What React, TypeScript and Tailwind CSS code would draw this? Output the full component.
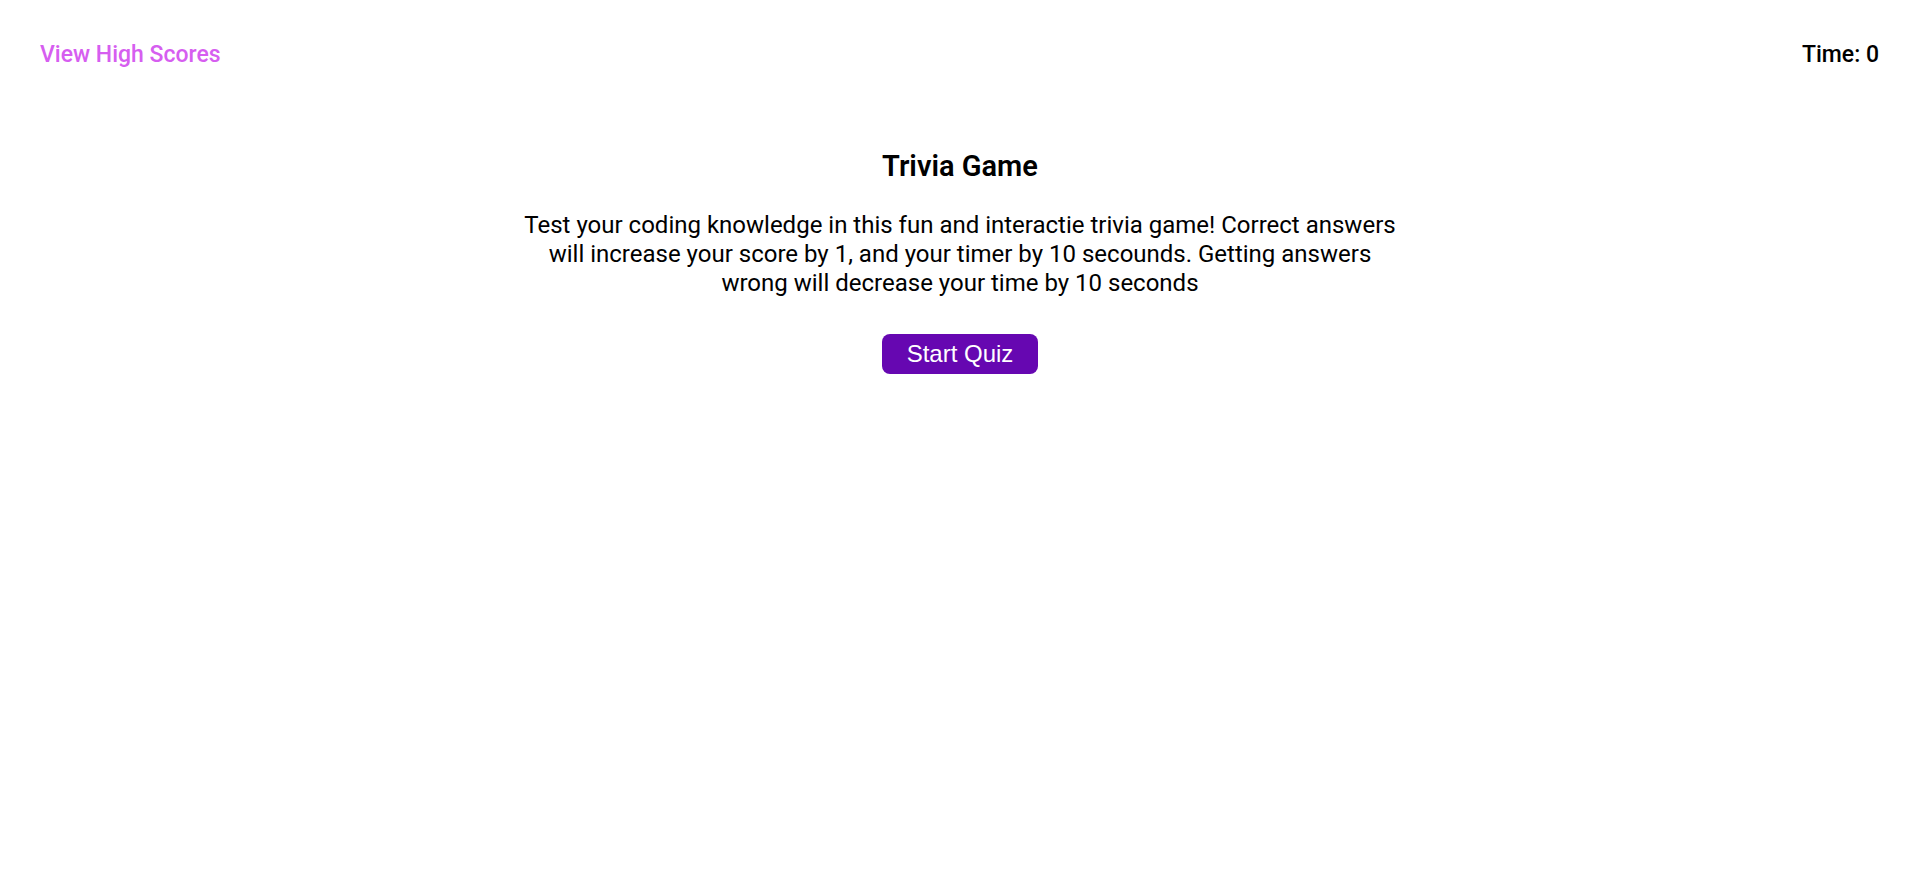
export default function App() {
  return (
    <div className="min-h-screen bg-white text-black font-['Roboto',sans-serif]">
      {/* Header */}
      <header className="flex items-start justify-between pl-10 pr-[33px] pt-[41px]">
        <a href="#" className="text-[23px] leading-[28px] font-medium text-[#d65ef0]">
          View High Scores
        </a>
        <div className="text-[23px] leading-[28px] font-medium">Time: 0</div>
      </header>

      {/* Intro */}
      <main className="flex flex-col items-center mt-[80px] pl-2">
        <h1 className="text-[29px] leading-[35px] font-semibold">Trivia Game</h1>
        <p className="mt-[27px] w-[880px] text-center text-[24px] leading-[29px]">
          Test your coding knowledge in this fun and interactie trivia game! Correct answers will increase
          your score by 1, and your timer by 10 secounds. Getting answers wrong will decrease your time by
          10 seconds
        </p>
        <button className="mt-[36px] h-10 px-[25px] rounded-lg bg-[#6607b1] text-white text-[24px] font-['Liberation_Sans',Arial,sans-serif]">
          Start Quiz
        </button>
      </main>
    </div>
  )
}
